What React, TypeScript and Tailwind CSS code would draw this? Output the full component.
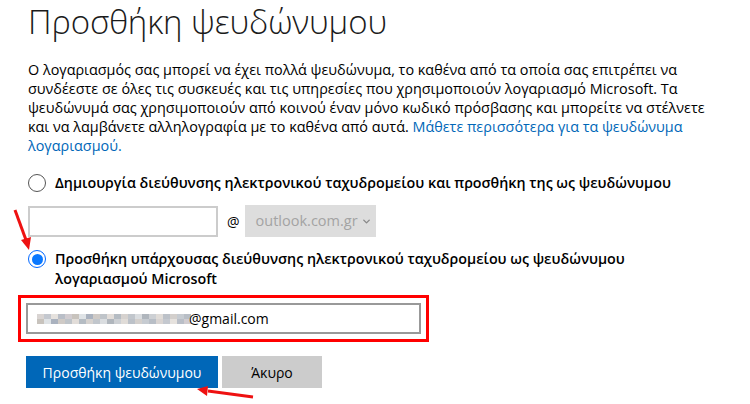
import { ChevronDown } from 'lucide-react'

const blurColors = [
  '#d9d4d2', '#c4c8cf', '#e6e2de', '#b9bec7', '#d1ccd0', '#c8c3bd', '#dfe3e6', '#aab2bf',
  '#cfcac6', '#bfc4c9', '#e2ddd9', '#b5bcc3', '#d6d2cf', '#c1c6cc', '#dadde0', '#b0b6bd',
  '#cdd0d4', '#e0dcd8', '#bcc1c8', '#d3cfcc', '#c6cbd1', '#b8bec6',
]

export default function App() {
  return (
    <div
      className="relative h-[404px] w-[750px] overflow-hidden bg-white pl-[28px] text-black"
      style={{ fontFamily: '"Open Sans", "Noto Sans", sans-serif' }}
    >
      <h1 className="pt-[2px] text-[33px] font-light leading-[40px] tracking-[-0.1px] text-[#1b1b1b]">
        Προσθήκη ψευδώνυμου
      </h1>

      <p className="mt-[18px] text-[14.4px] leading-[19px] whitespace-nowrap">
        Ο λογαριασμός σας μπορεί να έχει πολλά ψευδώνυμα, το καθένα από τα οποία σας επιτρέπει να
        <br />
        συνδέεστε σε όλες τις συσκευές και τις υπηρεσίες που χρησιμοποιούν λογαριασμό Microsoft. Τα
        <br />
        ψευδώνυμά σας χρησιμοποιούν από κοινού έναν μόνο κωδικό πρόσβασης και μπορείτε να στέλνετε
        <br />
        και να λαμβάνετε αλληλογραφία με το καθένα από αυτά.{' '}
        <a className="text-[#0067b8]">Μάθετε περισσότερα για τα ψευδώνυμα</a>
        <br />
        <a className="text-[#0067b8]">λογαριασμού.</a>
      </p>

      <label className="mt-[18px] flex items-center gap-[9px]">
        <span className="size-[18px] rounded-full border border-[#555] bg-white" />
        <span className="text-[14.3px] leading-[20px] font-semibold whitespace-nowrap">
          Δημιουργία διεύθυνσης ηλεκτρονικού ταχυδρομείου και προσθήκη της ως ψευδώνυμου
        </span>
      </label>

      <div className="mt-[12px] flex items-center">
        <div className="h-[31px] w-[190px] border-2 border-[#cccccc] bg-white" />
        <span className="ml-[9px] text-[14px]">@</span>
        <div className="ml-[5px] flex h-[32px] w-[131px] items-center bg-[#dddddd] pl-[11px] text-[14.5px] text-[#a3a3a3]">
          outlook.com.gr
          <ChevronDown className="ml-[3px] size-[11px] text-[#888]" strokeWidth={3} />
        </div>
      </div>

      <label className="mt-[12px] flex items-start gap-[9px]">
        <span className="mt-[1px] flex size-[18px] shrink-0 items-center justify-center rounded-full border-[1.5px] border-[#0067ff] bg-white">
          <span className="size-[11px] rounded-full bg-[#0a78ff]" />
        </span>
        <span className="text-[14.3px] leading-[20px] font-semibold">
          Προσθήκη υπάρχουσας διεύθυνσης ηλεκτρονικού ταχυδρομείου ως ψευδώνυμου
          <br />
          λογαριασμού Microsoft
        </span>
      </label>

      <div className="mt-[6px] -ml-[10px] w-[411px] border-[3px] border-[#ff0000] px-[5px] py-[5px]">
        <div className="flex h-[31px] items-center border-2 border-[#999999] bg-white pl-[9px] text-[14px]">
          <span className="flex">
            {blurColors.map((c, i) => (
              <span key={i} className="flex flex-col">
                <span className="h-[5px] w-[7px]" style={{ background: c }} />
                <span className="h-[5px] w-[7px]" style={{ background: blurColors[(i + 5) % blurColors.length] }} />
              </span>
            ))}
          </span>
          <span className="-ml-[2px]">@gmail.com</span>
        </div>
      </div>

      <div className="mt-[14px] flex gap-[4px]">
        <button className="-ml-[2px] h-[32px] w-[192px] bg-[#0067b8] text-[14px] text-white">
          Προσθήκη ψευδώνυμου
        </button>
        <button className="h-[32px] w-[100px] bg-[#cccccc] text-[14px] text-black">Άκυρο</button>
      </div>

      <svg className="absolute left-0 top-0" width="750" height="404" viewBox="0 0 750 404">
        <line x1="15" y1="210" x2="26" y2="240" stroke="#ee1111" strokeWidth="3" />
        <polygon points="29,250 21,240 31,237" fill="#ee1111" />
        <line x1="253" y1="397" x2="208" y2="391" stroke="#ee1111" strokeWidth="3" />
        <polygon points="197,389 208,386 207,396" fill="#ee1111" />
      </svg>
    </div>
  )
}
